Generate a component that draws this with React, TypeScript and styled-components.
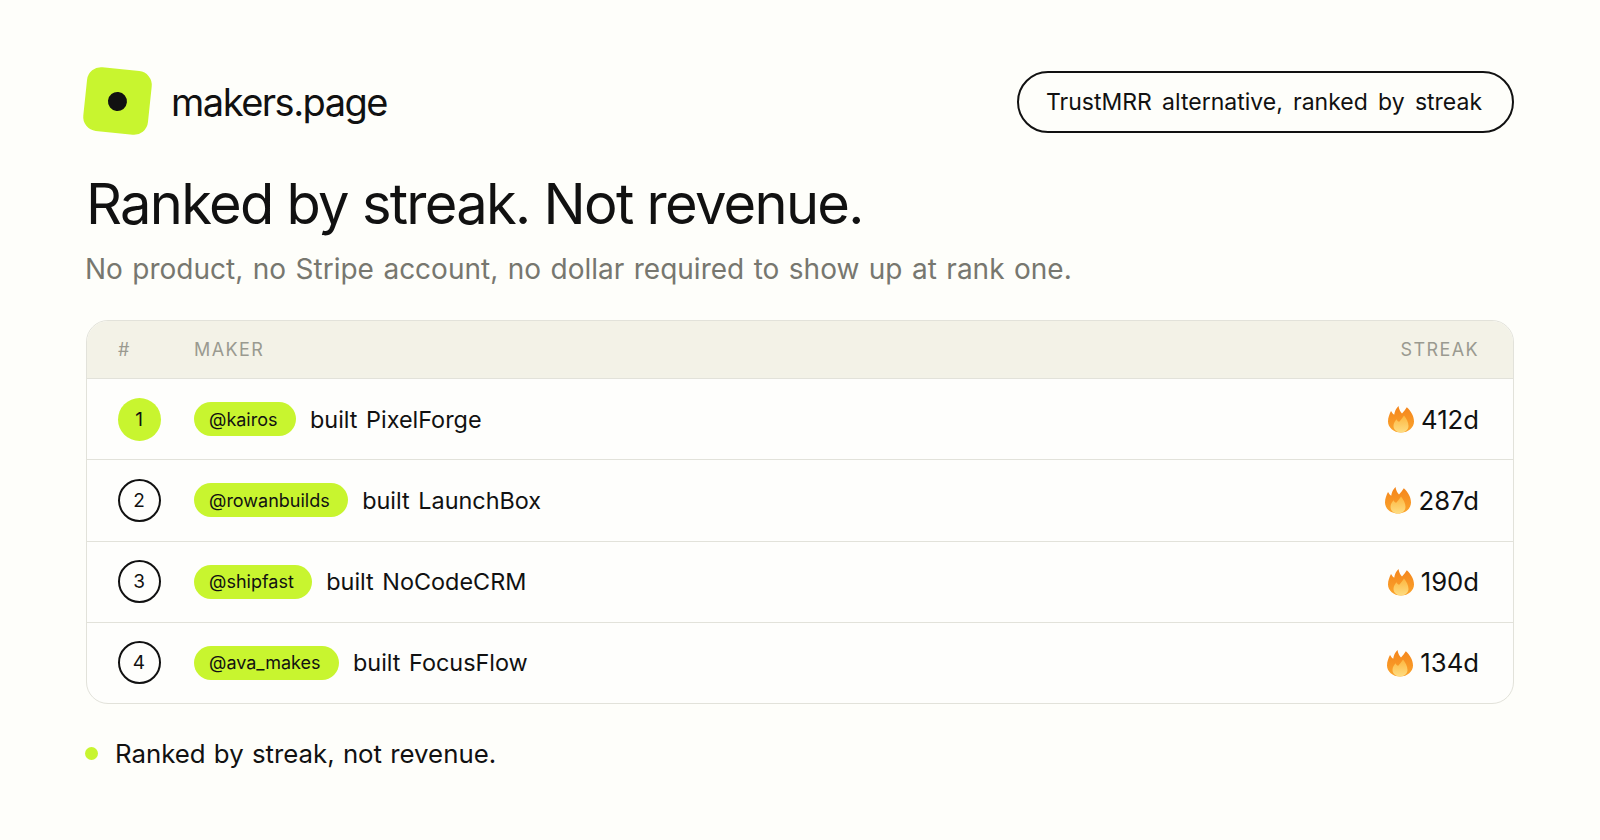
import React from 'react';
import styled, { createGlobalStyle } from 'styled-components';

const GlobalStyle = createGlobalStyle`
  html, body {
    margin: 0;
    padding: 0;
    background: #fefefa;
  }
  body {
    font-family: Inter, "Liberation Sans", sans-serif;
    color: #111111;
  }
`;

const Page = styled.div`
  width: 1600px;
  height: 840px;
  box-sizing: border-box;
  padding: 68px 86px 0;
  overflow: hidden;
`;

const Header = styled.header`
  display: flex;
  align-items: center;
  justify-content: space-between;
  height: 68px;
`;

const Brand = styled.div`
  display: flex;
  align-items: center;
  gap: 21px;
  margin-left: -1px;
`;

const LogoMark = styled.div`
  width: 65px;
  height: 64px;
  border-radius: 14px;
  background: #c8f52f;
  transform: translateY(-1px) rotate(6deg);
  display: flex;
  align-items: center;
  justify-content: center;
`;

const LogoDot = styled.span`
  width: 19px;
  height: 19px;
  border-radius: 50%;
  background: #111111;
`;

const BrandName = styled.span`
  font-size: 38px;
  font-weight: 400;
  letter-spacing: -1.5px;
`;

const Pill = styled.div`
  box-sizing: border-box;
  width: 497px;
  height: 62px;
  padding-right: 3px;
  border: 2.5px solid #111111;
  border-radius: 31px;
  display: flex;
  align-items: center;
  justify-content: center;
  font-size: 23px;
  word-spacing: 3.8px;
`;

const Title = styled.h1`
  margin: 34px 0 0;
  font-size: 56px;
  line-height: 68px;
  font-weight: 400;
  letter-spacing: -1.7px;
`;

const Subtitle = styled.p`
  margin: 13px 0 0 -1px;
  font-size: 28px;
  line-height: 36px;
  color: #77776f;
  word-spacing: 1.6px;
`;

const Table = styled.div`
  margin-top: 33px;
  border: 1.5px solid #e2e2da;
  border-radius: 22px;
  overflow: hidden;
  background: #fefefc;
`;

const HeadRow = styled.div`
  display: flex;
  align-items: center;
  justify-content: space-between;
  height: 57px;
  padding: 0 34px 0 31px;
  background: #f3f2e7;
  border-bottom: 1.5px solid #e2e2da;
  font-size: 18px;
  letter-spacing: 1.4px;
  color: #9a9a90;
`;

const HeadLeft = styled.div`
  display: flex;
`;

const HashCell = styled.span`
  width: 76px;
`;

const Row = styled.div`
  display: flex;
  align-items: center;
  height: 80.25px;
  padding: 0 34px 0 30.5px;
  & + & {
    border-top: 1.5px solid #e2e2da;
  }
`;

const Rank = styled.div<{ $first?: boolean }>`
  box-sizing: border-box;
  flex: none;
  width: 43px;
  height: 43px;
  border-radius: 50%;
  margin-right: 33.5px;
  display: flex;
  align-items: center;
  justify-content: center;
  font-size: 19px;
  background: ${(p) => (p.$first ? '#c8f52f' : 'transparent')};
  border: ${(p) => (p.$first ? 'none' : '2.5px solid #111111')};
`;

const Handle = styled.span`
  height: 34px;
  padding: 0 18.5px 0 15px;
  border-radius: 17px;
  background: #c8f52f;
  display: flex;
  align-items: center;
  font-size: 18px;
`;

const Built = styled.span`
  margin-left: 14px;
  font-size: 23.4px;
  word-spacing: 2px;
`;

const Streak = styled.div`
  margin-left: auto;
  display: flex;
  align-items: center;
  gap: 6px;
  font-size: 25.7px;
`;

const Footer = styled.div`
  margin-top: 34px;
  display: flex;
  align-items: center;
  gap: 17px;
  font-size: 25.8px;
  word-spacing: 1px;
  margin-left: -1px;
`;

const FooterDot = styled.span`
  width: 13px;
  height: 13px;
  border-radius: 50%;
  background: #c8f52f;
`;

const Flame: React.FC = () => (
  <svg width="28" height="28" viewBox="0 0 28 28" aria-hidden="true">
    <defs>
      <linearGradient id="flameOuter" x1="0" y1="0" x2="0" y2="1">
        <stop offset="0" stopColor="#f4851c" />
        <stop offset="1" stopColor="#fba42c" />
      </linearGradient>
      <linearGradient id="flameInner" x1="0" y1="0" x2="0" y2="1">
        <stop offset="0" stopColor="#fdb63e" />
        <stop offset="1" stopColor="#fedd82" />
      </linearGradient>
    </defs>
    <path
      fill="url(#flameOuter)"
      d="M14 27.5C6.500 27.500 1 22.500 1 16.500C1 12.500 2.500 9 4 6C5 7.500 5.800 9 7.200 9.800C7.600 6.500 9 3.500 11.500 1C12 4 13.200 6.500 15 8.500C16.800 6.500 18.500 4.500 19.800 2.200C23.500 5.500 27 10.500 27 16.500C27 22.500 21.500 27.500 14 27.500Z"
    />
    <path
      fill="url(#flameInner)"
      d="M14 27.5C9.500 27.500 6.500 24.500 6.500 21C6.500 18 8 16 9.500 14.200C10.200 15.500 11 16.500 12.200 16.800C13.500 15 15.500 13 17 10.500C19.500 13.500 21.500 17.500 21.500 21C21.500 24.500 18.500 27.500 14 27.500Z"
    />
  </svg>
);

const makers = [
  { rank: 1, handle: '@kairos', product: 'PixelForge', days: '412d' },
  { rank: 2, handle: '@rowanbuilds', product: 'LaunchBox', days: '287d' },
  { rank: 3, handle: '@shipfast', product: 'NoCodeCRM', days: '190d' },
  { rank: 4, handle: '@ava_makes', product: 'FocusFlow', days: '134d' },
];

const App: React.FC = () => {
  return (
    <Page>
      <GlobalStyle />
      <Header>
        <Brand>
          <LogoMark>
            <LogoDot />
          </LogoMark>
          <BrandName>makers.page</BrandName>
        </Brand>
        <Pill>TrustMRR alternative, ranked by streak</Pill>
      </Header>
      <Title>Ranked by streak. Not revenue.</Title>
      <Subtitle>No product, no Stripe account, no dollar required to show up at rank one.</Subtitle>
      <Table>
        <HeadRow>
          <HeadLeft>
            <HashCell>#</HashCell>
            <span>MAKER</span>
          </HeadLeft>
          <span>STREAK</span>
        </HeadRow>
        {makers.map((m) => (
          <Row key={m.rank}>
            <Rank $first={m.rank === 1}>{m.rank}</Rank>
            <Handle>{m.handle}</Handle>
            <Built>built {m.product}</Built>
            <Streak>
              <Flame />
              {m.days}
            </Streak>
          </Row>
        ))}
      </Table>
      <Footer>
        <FooterDot />
        Ranked by streak, not revenue.
      </Footer>
    </Page>
  );
};

export default App;
